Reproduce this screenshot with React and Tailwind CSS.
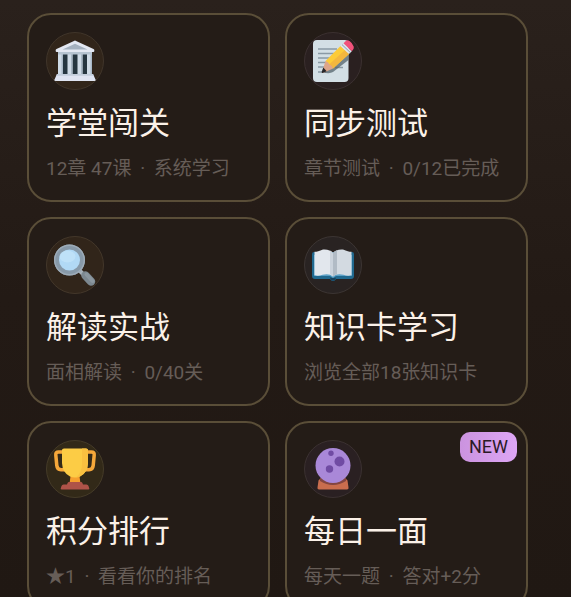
function TempleIcon() {
  return (
    <svg viewBox="0 0 44 44" className="h-11 w-11" aria-hidden="true">
      <path d="M6 15h32v21H6z" fill="#263640" />
      <path d="M5 14h5v22H5zM14.500 14h5v22h-5zM24.500 14h5v22h-5zM34 14h5v22h-5z" fill="#cfdbe6" />
      <path d="M8.500 14H10v22H8.500zM18 14h1.500v22H18zM28 14h1.500v22H28zM37.500 14H39v22h-1.500z" fill="#a9b8c6" />
      <path d="M22 1.500 40.500 10q.8.400.8 1.200V12q0 1-1 1H3.700q-1 0-1-1v-.8q0-.8.800-1.200z" fill="#e3e8f2" />
      <path d="M22 4.800 34.500 10.500h-25z" fill="#a4b1bf" />
      <path d="M5 13h34v2.500H5z" fill="#b6c4d1" />
      <path d="M4 35h36l2.500 5.500q.5 1.500-1 1.500h-39q-1.500 0-1-1.500z" fill="#dfe4f1" />
      <path d="M4 35h36l.8 1.800H3.200z" fill="#c3cedb" />
    </svg>
  );
}

function MemoIcon() {
  return (
    <svg viewBox="0 0 44 44" className="h-11 w-11" aria-hidden="true">
      <rect x="2" y="1" width="35.500" height="42" rx="4" fill="#d3dfe5" />
      <path d="M7 10h19M7 14.500h17M7 19h15M7 23.500h12M7 28h9M24 28.500h8M7 33h8" stroke="#8a9aa5" strokeWidth="1.600" />
      <path d="M12 33.500 37.500 13v8L22 33q-3 2-10 .5z" fill="#53636b" opacity=".75" />
      <path d="M14.500 22 29.500 7l8.500 8-16 14.500z" fill="#fccb38" />
      <path d="M18 25.500 34 11l4 4-16 14.500z" fill="#f3b73e" />
      <path d="M29.500 7l3-2.800 8.300 8L38 15z" fill="#dfe6ef" />
      <path d="m31 5.600 8.400 8" stroke="#8d9ba7" strokeWidth="1" />
      <path d="m32.500 4.200 2-2q1.800-1.600 4-.2 3.200 2.200 4.200 5.500.5 1.800-.7 3.200l-1.200 1.500z" fill="#f1527b" />
      <path d="M14.500 22q3 1 4 3.500 3 .8 3.500 4l-9.500 4.200q-2 .7-1.300-1.300z" fill="#dda58a" />
      <path d="m12.300 28.600-1.500 4q-.6 1.900 1.300 1.200l3.600-1.600z" fill="#26262a" />
    </svg>
  );
}

function MagnifierIcon() {
  return (
    <svg viewBox="0 0 44 44" className="h-11 w-11" aria-hidden="true">
      <path d="m26 27 5 5" stroke="#a5b0b8" strokeWidth="4" />
      <path d="m32.500 32.500 5.500 6" stroke="#7c8890" strokeWidth="8.500" strokeLinecap="round" />
      <path d="m33.500 31.500 6 6.500" stroke="#8b979f" strokeWidth="4" strokeLinecap="round" />
      <circle cx="16.500" cy="17" r="13" fill="#b1d9f5" stroke="#8799a8" strokeWidth="5" />
      <circle cx="16.500" cy="17" r="14.800" fill="none" stroke="#9dabb7" strokeWidth="1.400" />
      <ellipse cx="14.500" cy="13.500" rx="8" ry="6" fill="#c3e4fa" opacity=".7" />
    </svg>
  );
}

function BookIcon() {
  return (
    <svg viewBox="0 0 44 44" className="h-11 w-11" aria-hidden="true">
      <path d="M3 9h38q2 0 2 2v22q0 3-3 3H25q-1 2-3 2t-3-2H4q-3 0-3-3V11q0-2 2-2z" fill="#20698f" />
      <path d="M3 12h38v21H25l-3 2-3-2H3z" fill="#5ba0c6" />
      <path d="M22 10Q19 6 12 6.500 6 9 3.500 8.800V32q3 1.500 8-.2 7-1.500 10.500 1.700z" fill="#e2e7ed" />
      <path d="M22 10Q25 6 32 6.500q6 2.500 8.500 2.300V32q-3 1.500-8-.2-7-1.500-10.500 1.700z" fill="#d3dae1" />
      <path d="M22 10q1.500-2 4-2.800v24q-2.500.5-4 2.300z" fill="#b1bbc5" />
      <path d="M22 10q-1.500-2-3-2.500v23.800q2 .7 3 2.200z" fill="#cbd3dc" />
      <path d="M19 34.500q3 1 6 0-.5 3-3 3t-3-3z" fill="#17425c" />
    </svg>
  );
}

function TrophyIcon() {
  return (
    <svg viewBox="0 0 44 44" className="h-11 w-11" aria-hidden="true">
      <path d="M11 5H5.500Q2.500 5 2.800 8l1 10.500q.4 4 4.200 4.200h5M33 5h5.500q3 0 2.700 3l-1 10.500q-.4 4-4.200 4.200h-5" fill="none" stroke="#f6a83a" strokeWidth="3.500" />
      <path d="M18 25h8l1.500 12h-11z" fill="#f6a02e" />
      <path d="M9 3q0-1.500 2-1.500h22q2 0 2 1.500v13q-.5 10-8 13.500-5 2-10 0Q9.500 26 9 16z" fill="#fccc45" />
      <path d="M29 1.500h4q2 0 2 1.500v13q-.5 10-8 13.500-2 .8-4 .9 6-5 6-14z" fill="#f9c040" />
      <path d="M16 35h12q1 0 1.400 1l.6 1.500h3.500q1.500 0 2 1.500l.8 2.500q.3 1-1 1H8.700q-1.300 0-1-1l.8-2.500q.5-1.500 2-1.500H14l.6-1.500q.4-1 1.400-1z" fill="#af5348" />
    </svg>
  );
}

function CrystalBallIcon() {
  return (
    <svg viewBox="0 0 44 44" className="h-11 w-11" aria-hidden="true">
      <path d="M9.500 32h25q1.500 0 2 1.500l1 7q.4 2-1.500 2H8q-1.900 0-1.500-2l1-7q.5-1.500 2-1.500z" fill="#c96d4e" />
      <path d="M9 34q13 8 26 0v-3H9z" fill="#834540" />
      <circle cx="22" cy="18.500" r="17.500" fill="#a988d8" />
      <circle cx="20" cy="6.300" r="2.700" fill="#704ba3" />
      <circle cx="28.500" cy="14.500" r="5" fill="#704ba3" />
      <circle cx="18.500" cy="22" r="3.700" fill="#704ba3" />
    </svg>
  );
}

const menuItems = [
  {
    title: "学堂闯关",
    desc: ["12章 47课", "系统学习"],
    icon: <TempleIcon />,
    circle: "bg-[#31251a] border-[#40352a]",
  },
  {
    title: "同步测试",
    desc: ["章节测试", "0/12已完成"],
    icon: <MemoIcon />,
    circle: "bg-[#2a2020] border-[#3b3030]",
  },
  {
    title: "解读实战",
    desc: ["面相解读", "0/40关"],
    icon: <MagnifierIcon />,
    circle: "bg-[#31251a] border-[#43372a]",
  },
  {
    title: "知识卡学习",
    desc: ["浏览全部18张知识卡"],
    icon: <BookIcon />,
    circle: "bg-[#292322] border-[#3c3533]",
  },
  {
    title: "积分排行",
    desc: ["★1", "看看你的排名"],
    icon: <TrophyIcon />,
    circle: "bg-[#322918] border-[#453b28]",
  },
  {
    title: "每日一面",
    desc: ["每天一题", "答对+2分"],
    icon: <CrystalBallIcon />,
    circle: "bg-[#2a2022] border-[#3b3131]",
    badge: "NEW",
  },
];

function MenuCard({ item }) {
  const [first, second] = item.desc;

  return (
    <button
      type="button"
      className="relative flex flex-col items-start rounded-3xl border-2 border-[#5a4e38] bg-[#241c17] p-[17px] text-left"
    >
      <span
        className={`flex h-[58px] w-[58px] items-center justify-center rounded-full border ${item.circle}`}
      >
        {item.icon}
      </span>

      <span className="mt-3.5 text-[31px] leading-10 whitespace-nowrap text-[#fbf1e8]">
        {item.title}
      </span>

      <span className="mt-[11px] text-[19px] leading-7 whitespace-nowrap text-[#665d57]">
        {first}
        {second && (
          <>
            {" "}
            <span className="mx-1">·</span> {second}
          </>
        )}
      </span>

      {item.badge && (
        <span className="absolute top-[9px] right-[9px] rounded-[10px] bg-linear-to-r from-[#cb93df] to-[#dda6f5] px-[9px] py-[3px] text-lg leading-6 text-[#2a1a26]">
          {item.badge}
        </span>
      )}
    </button>
  );
}

function App() {
  return (
    <main className="h-screen overflow-hidden bg-linear-to-b from-[#2a211c] via-[#231a15] to-[#201813] pt-[13px] pr-[43px] pl-[27px] font-[Roboto,'Noto_Sans_CJK_SC',sans-serif]">
      <div className="grid grid-cols-2 gap-[15px]">
        {menuItems.map((item) => (
          <MenuCard key={item.title} item={item} />
        ))}
      </div>
    </main>
  );
}

export default App;
